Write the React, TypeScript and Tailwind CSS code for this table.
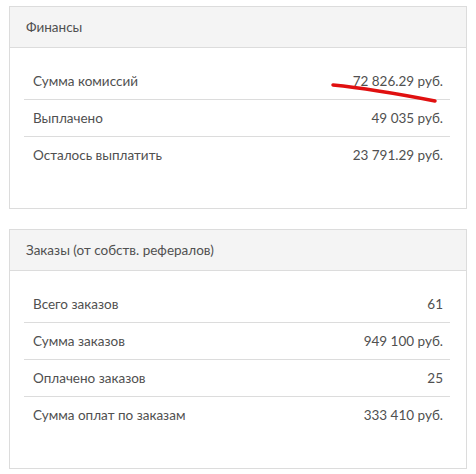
const finance = [
  { label: "Сумма комиссий", value: "72 826.29 руб." },
  { label: "Выплачено", value: "49 035 руб." },
  { label: "Осталось выплатить", value: "23 791.29 руб." },
];

const orders = [
  { label: "Всего заказов", value: "61" },
  { label: "Сумма заказов", value: "949 100 руб." },
  { label: "Оплачено заказов", value: "25" },
  { label: "Сумма оплат по заказам", value: "333 410 руб." },
];

type Row = { label: string; value: string };

const Panel = ({ title, rows, mark }: { title: string; rows: Row[]; mark?: boolean }) => {
  return (
    <div className="border border-[#dcdcdc] bg-white">
      <div className="h-[41px] flex items-center px-4 bg-[#f4f4f4] border-b border-[#dcdcdc] text-[13.5px] text-[#505050]">
        {title}
      </div>
      <div className="pt-[15px] pb-[34px] pl-[14px] pr-[16px]">
        {rows.map((r, i) => (
          <div
            key={r.label}
            className={
              "relative h-[37px] flex items-center justify-between pl-[9px] pr-[7px] text-[13.5px] text-[#505050] " +
              (i < rows.length - 1 ? "border-b border-[#dcdcdc]" : "")
            }
          >
            <span>{r.label}</span>
            <span>{r.value}</span>
            {mark && i === 0 && (
              <svg className="absolute left-[305px] top-[18px]" width="112" height="24" viewBox="0 0 112 24">
                <path
                  d="M4 4 C 35 7, 70 13, 106 20"
                  stroke="#e01010"
                  strokeWidth="3.5"
                  strokeLinecap="round"
                  fill="none"
                />
              </svg>
            )}
          </div>
        ))}
      </div>
    </div>
  );
};

export default function App() {
  return (
    <div
      className="w-[476px] h-[474px] bg-white pt-[6px] pl-[9px] pr-[9px] flex flex-col gap-[20px]"
      style={{ fontFamily: "Lato, 'Open Sans', sans-serif" }}
    >
      <Panel title="Финансы" rows={finance} mark />
      <Panel title="Заказы (от собств. рефералов)" rows={orders} />
    </div>
  );
}
